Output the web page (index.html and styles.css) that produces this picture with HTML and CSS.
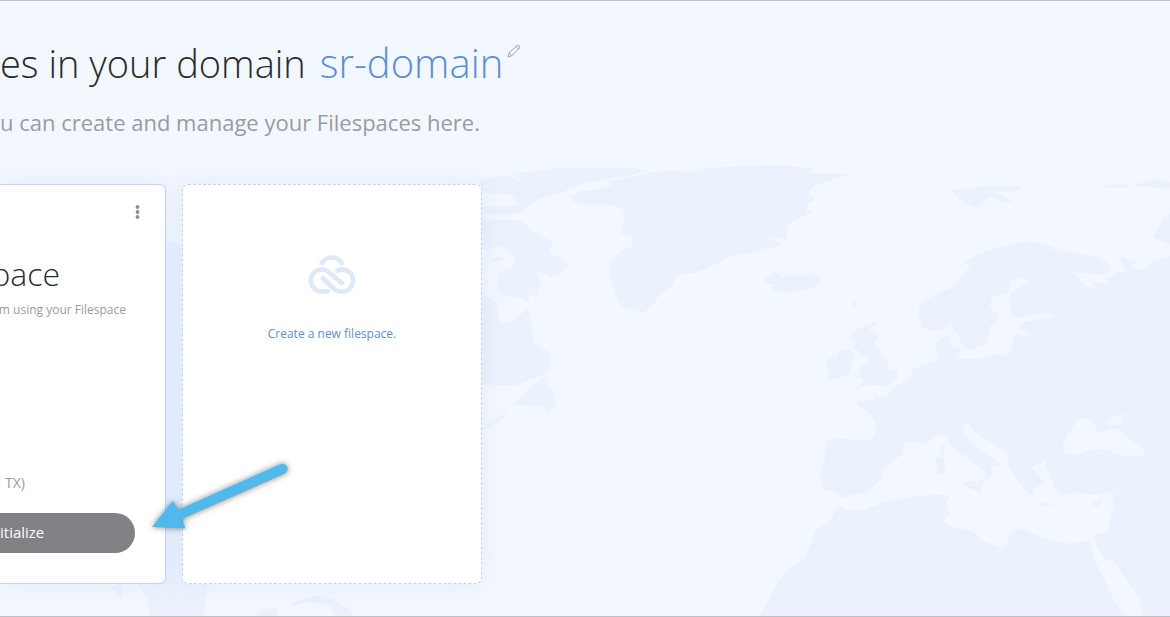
FILE: index.html
```html
<!DOCTYPE html>
<html lang="en">
<head>
<meta charset="utf-8">
<title>Filespaces</title>
<link rel="stylesheet" href="styles.css">
</head>
<body>
<div class="page">
  <svg class="map" viewBox="0 0 1170 617" preserveAspectRatio="xMinYMin slice" aria-hidden="true">
    <g class="land" transform="translate(480 150) scale(.33333)">
      <path d="M665 55L780 48L920 45L1000 58L985 72L1050 68L1110 73L1060 88L1005 105L985 125L1003 150L985 160L975 182L1003 185L960 205L925 220L920 270L865 262L905 282L830 305L750 320L700 345L645 370L605 372L585 388L575 410L540 435L515 465L490 490L465 482L425 470L405 430L393 390L387 355L400 325L430 300L460 285L455 262L420 250L432 210L430 180L400 165L320 165L280 155L268 140L300 125L370 115L400 105L385 95L500 68L560 62L640 64Z"/>
      <path d="M95 70L250 55L330 52L470 55L498 64L420 82L330 95L270 115L240 130L180 145L160 160L140 168L128 188L90 192L0 193L0 172L120 165L95 135L0 128L0 92L65 75L130 95Z"/>
      <path d="M0 210L120 210L150 240L210 270L218 285L205 305L240 325L268 345L245 370L212 382L175 360L168 372L183 400L170 440L140 430L150 458L120 445L65 432L50 400L60 365L100 350L105 320L60 285L20 300L0 290Z"/>
      <path d="M0 430L50 460L55 510L75 522L115 500L145 472L155 530L160 580L205 605L215 640L205 670L160 685L110 706L0 706Z"/>
      <path d="M102 765L150 715L195 680L205 690L200 710L220 718L228 770L205 788L190 768Z"/>
      <path d="M0 832L45 812L80 785L72 802L45 820L0 845ZM32 325L65 318L72 330L40 334Z"/>
    </g>
    <g class="land" transform="translate(750 150) scale(.33333)">
      <path d="M1260 320L1215 332L1180 355L1160 360L1145 348L1160 335L1110 325L1120 355L1135 365L1105 365L1070 385L1075 402L1025 395L1043 418L1010 410L985 385L965 367L1000 368L1060 376L1085 360L1075 340L1040 322L960 305L905 298L910 290L870 280L830 275L770 287L720 300L660 325L638 340L665 342L625 390L610 410L555 435L510 460L505 495L515 530L550 546L580 537L600 520L625 560L640 595L670 598L710 580L718 530L745 515L745 490L718 475L725 445L775 425L780 395L810 382L838 390L820 405L780 430L782 490L800 503L880 490L915 498L880 508L825 515L800 535L835 540L838 560L815 560L800 548L787 570L785 600L765 620L740 612L690 628L660 625L615 628L635 590L605 590L600 550L560 575L558 600L570 632L520 642L495 655L475 690L440 705L430 720L400 745L372 735L372 752L318 752L325 770L360 790L378 815L375 860L360 872L265 865L225 875L225 930L210 975L218 1020L260 1025L280 1045L310 1032L355 1025L395 985L395 960L460 910L462 880L490 873L520 882L570 853L590 860L598 885L660 930L705 965L708 980L695 992L640 995L650 1010L690 1028L700 1000L725 975L722 955L735 945L755 955L750 940L700 905L670 885L640 850L640 828L655 822L680 850L775 910L775 945L800 985L815 1010L850 1040L850 1015L885 1000L845 950L890 930L885 950L902 975L915 1020L940 1035L985 1025L1030 1035L1090 1025L1090 1075L1070 1145L1030 1155L1040 1190L1070 1235L1085 1225L1130 1290L1165 1340L1180 1401L1260 1401Z"/>
      <path d="M1020 1170L965 1182L880 1165L815 1135L775 1155L770 1190L755 1197L700 1172L670 1145L610 1130L580 1115L598 1090L588 1060L598 1040L570 1032L480 1043L400 1055L345 1080L280 1078L268 1063L240 1110L195 1145L180 1190L165 1225L110 1260L80 1300L60 1345L25 1401L1130 1401L1095 1355L1065 1290L1030 1225Z"/>
      <path d="M568 890L585 880L580 920L588 960L580 975L562 970L558 925L575 920ZM862 1055L918 1065L895 1070L868 1066ZM1022 1058L1065 1042L1045 1070L1030 1068Z"/>
      <path d="M380 516L355 540L388 552L373 580L400 620L415 640L415 655L443 660L440 690L400 710L360 703L310 720L345 690L320 680L335 660L325 655L355 635L350 618L330 622L325 600L308 592L315 570L303 568L310 545L335 530Z"/>
      <path d="M270 602L300 600L316 615L305 640L300 670L250 690L225 685L240 660L230 650L235 625L260 620ZM305 453L325 455L315 474Z"/>
      <path d="M45 385L75 366L98 385L110 375L175 375L190 366L215 392L190 412L125 430L65 420L75 405L48 400Z"/>
      <path d="M600 118L680 115L700 108L760 107L815 113L800 124L735 127L790 152L765 160L725 140L705 150L683 174L630 150Z"/>
      <path d="M1050 107L1125 100L1135 113L1090 115ZM1145 110L1180 96L1215 86L1260 97L1260 117L1190 110ZM1260 190L1240 202L1225 235L1208 262L1260 286Z"/>
      <path class="sea" d="M988 803L1030 815L1045 850L1100 835L1150 875L1187 900L1175 918L1130 920L1060 898L1010 903L975 917L940 910L938 885L955 850ZM1067 815L1080 803L1130 788L1115 808L1117 825L1075 825Z"/>
    </g>
    <path class="land" d="M110 587L122 598L122 584L138 584Q150 600 149 617L205 617Q204 600 208 584L182 560L182 245Q174 240 166 243L166 560Z"/>
    <path class="land" d="M292 605Q310 590 335 600L350 610L355 617L335 617L330 606Q310 599 292 607ZM252 617L260 610L277 608L277 617Z"/>
  </svg>

  <header class="intro">
    <h1 class="title">
      <span class="title-text">es in your domain</span>
      <a class="domain" href="#domain">sr-domain</a>
      <button class="edit" type="button" aria-label="Edit domain">
        <svg width="14" height="14" viewBox="0 0 14 14" aria-hidden="true"><path d="M1 13L2 9L10 1.5Q11 .8 12.200 1.800Q13.200 3 12.500 4L4.500 12ZM2 9L4.500 12M9 2.500L11.500 5"/></svg>
      </button>
    </h1>
    <p class="subtitle">u can create and manage your Filespaces here.</p>
  </header>

  <main class="cards">
    <section class="card filespace">
      <button class="menu" type="button" aria-label="Filespace menu">
        <svg width="5" height="14" viewBox="0 0 5 14" aria-hidden="true"><circle cx="2.500" cy="2" r="1.900"/><circle cx="2.500" cy="7" r="1.900"/><circle cx="2.500" cy="12" r="1.900"/></svg>
      </button>
      <h2 class="name">pace</h2>
      <p class="hint">m using your Filespace</p>
      <p class="region">TX)</p>
      <button class="initialize" type="button">itialize</button>
    </section>
    <a class="card create" href="#create">
      <svg class="logo" width="48" height="42" viewBox="54 42 144 126" aria-hidden="true">
        <path d="M94 78A33 33 0 0 1 157 78"/>
        <path d="M118 154C112 158 106 158 96 158A33 33 0 0 1 96 91C106 91 110 94 116 99L160 136"/>
        <path d="M137 97C143 93 148 91 156 91A33 33 0 0 1 156 158C146 158 140 156 133 151L94 113"/>
      </svg>
      <span>Create a new filespace.</span>
    </a>
    <svg class="arrow" width="150" height="80" viewBox="145 455 150 80" aria-hidden="true">
      <path d="M152 527L173 501L178 510L280 464.500A5 5 0 0 1 285 473.500L182 519L185.500 528.500Z"/>
    </svg>
  </main>
</div>
</body>
</html>
```

FILE: styles.css
```css
* { box-sizing: border-box; }

body {
  margin: 0;
  font-family: "Open Sans", "Noto Sans", sans-serif;
  background: #f3f7ff;
  color: #2b2b2b;
}

h1, h2, p { margin: 0; font-weight: 400; }

button { padding: 0; border: 0; background: none; font: inherit; cursor: pointer; }

a { text-decoration: none; }

.page {
  position: relative;
  min-height: 100vh;
  overflow: hidden;
  border-top: 1px solid #bdbfc3;
  border-bottom: 1px solid #bdbfc3;
}

.map {
  position: absolute;
  top: -1px;
  left: 0;
  width: 100%;
  height: calc(100% + 2px);
}

.land { fill: #ebf2fd; }
.sea { fill: #f3f7ff; }

.intro { position: relative; padding-top: 32px; }

.title {
  display: flex;
  align-items: flex-start;
  font-size: 40px;
  line-height: 60px;
  font-weight: 300;
  white-space: nowrap;
}

.title-text { font-size: 38px; }

.domain { margin-left: 14px; color: #5c8fd2; }

.edit { display: flex; margin: 11px 0 0 4px; }
.edit svg { fill: none; stroke: #a3a3a8; stroke-width: 1; }

.subtitle {
  margin-top: 13px;
  font-size: 22px;
  line-height: 32px;
  color: #9b9ba0;
}

.cards {
  position: relative;
  display: flex;
  gap: 16px;
  margin-top: 46px;
}

.card {
  display: flex;
  flex-direction: column;
  min-height: 400px;
  background: #fff;
  border: 1px solid #c3d5ee;
  border-radius: 6px;
  box-shadow: 0 0 30px rgba(110, 155, 220, .11);
}

.filespace {
  align-items: flex-end;
  width: 166px;
  padding: 20px 30px 30px 0;
  border-left: 0;
  border-radius: 0 6px 6px 0;
  white-space: nowrap;
}

.menu { margin-right: -7px; padding: 0 2px; display: flex; }
.menu svg { fill: #8e8e93; }

.name {
  margin: 33px 75px 0 0;
  font-size: 32px;
  line-height: 44px;
  font-weight: 300;
}

.hint {
  margin: 5px 9px 0 0;
  font-size: 12px;
  line-height: 18px;
  color: #9b9ba0;
}

.region {
  margin: auto 110px 20px 0;
  font-size: 14px;
  line-height: 20px;
  color: #9b9ba0;
}

.initialize {
  align-self: stretch;
  height: 40px;
  padding-bottom: 2px;
  border-radius: 0 20px 20px 0;
  background: #828186;
  color: #fff;
  font-size: 15px;
  text-align: left;
}

.create {
  align-items: center;
  width: 300px;
  padding-top: 68px;
  border-style: dashed;
  color: #5c8fd2;
  font-size: 12px;
  line-height: 18px;
}

.logo {
  margin-bottom: 30px;
  fill: none;
  stroke: #dfe8f6;
  stroke-width: 14;
}

.arrow {
  position: absolute;
  left: 145px;
  top: 271px;
  fill: #4fb9eb;
  filter: drop-shadow(0 0 3px rgba(60, 50, 50, .6));
}
```
